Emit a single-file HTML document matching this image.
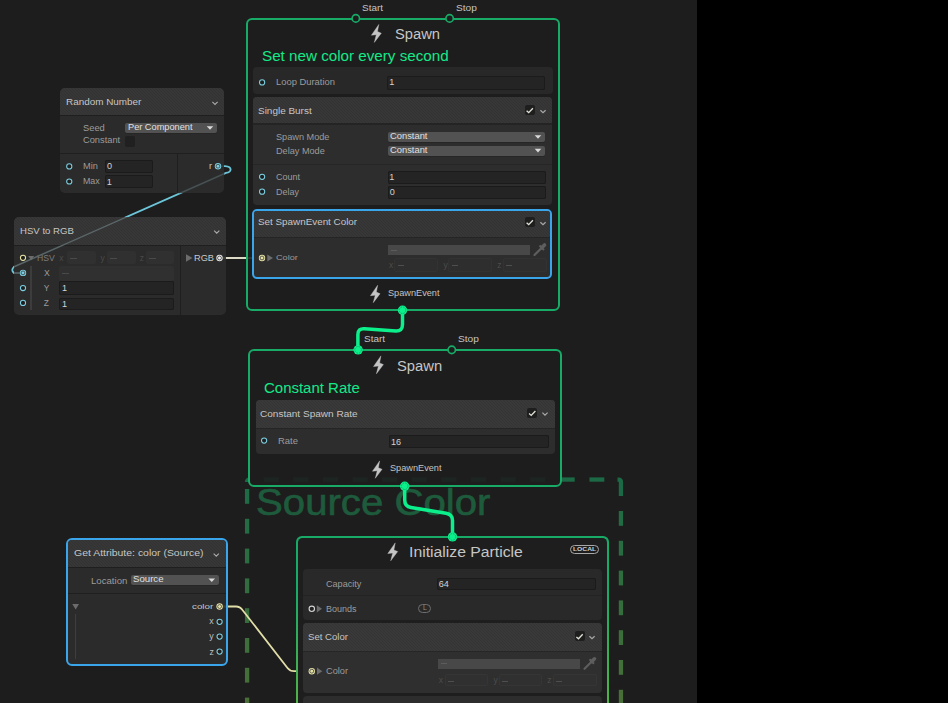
<!DOCTYPE html>
<html><head><meta charset="utf-8"><style>
html,body{margin:0;padding:0;}
body{width:948px;height:703px;overflow:hidden;background:#1d1d1d;position:relative;font-family:"Liberation Sans", sans-serif;}
.t{position:absolute;white-space:nowrap;line-height:1;font-family:"Liberation Sans", sans-serif;}
.r{position:absolute;box-sizing:content-box;}
svg{position:absolute;left:0;top:0;}
</style></head><body>
<svg width="948" height="703" style="z-index:0"><rect x="263.9" y="477.4" width="14.8" height="4.3" fill="#1c6a45"/><rect x="293.5" y="477.4" width="14.8" height="4.3" fill="#1c6a45"/><rect x="323.1" y="477.4" width="14.8" height="4.3" fill="#1c6a45"/><rect x="352.7" y="477.4" width="14.8" height="4.3" fill="#1c6a45"/><rect x="382.3" y="477.4" width="14.8" height="4.3" fill="#1c6a45"/><rect x="411.9" y="477.4" width="14.8" height="4.3" fill="#1c6a45"/><rect x="441.5" y="477.4" width="14.8" height="4.3" fill="#1c6a45"/><rect x="471.1" y="477.4" width="14.8" height="4.3" fill="#1c6a45"/><rect x="500.7" y="477.4" width="14.8" height="4.3" fill="#1c6a45"/><rect x="530.3" y="477.4" width="14.8" height="4.3" fill="#1c6a45"/><rect x="559.9" y="477.4" width="14.8" height="4.3" fill="#1c6a45"/><rect x="589.5" y="477.4" width="14.8" height="4.3" fill="#1c6a45"/><path d="M617.5,479.55 L618.5,479.55 Q620.95,479.55 620.95,482 L620.95,496" fill="none" stroke="#1c6a45" stroke-width="4.3"/><path d="M247.1,482 Q247.1,479.55 249.5,479.55" fill="none" stroke="#1c6a45" stroke-width="4.3"/><rect x="618.8" y="511.0" width="4.3" height="14.8" fill="#236b43"/><rect x="618.8" y="540.8" width="4.3" height="14.8" fill="#296c41"/><rect x="618.8" y="570.6" width="4.3" height="14.8" fill="#2f6d3f"/><rect x="618.8" y="600.4" width="4.3" height="14.8" fill="#366d3d"/><rect x="618.8" y="630.2" width="4.3" height="14.8" fill="#3c6e3b"/><rect x="618.8" y="660.0" width="4.3" height="14.8" fill="#426f3a"/><rect x="618.8" y="689.8" width="4.3" height="14.8" fill="#486f38"/><rect x="244.95" y="489.0" width="4.3" height="14.8" fill="#1e6b45"/><rect x="244.95" y="518.8" width="4.3" height="14.8" fill="#256b43"/><rect x="244.95" y="548.6" width="4.3" height="14.8" fill="#2b6c41"/><rect x="244.95" y="578.4" width="4.3" height="14.8" fill="#316d3f"/><rect x="244.95" y="608.2" width="4.3" height="14.8" fill="#376d3d"/><rect x="244.95" y="638.0" width="4.3" height="14.8" fill="#3e6e3b"/><rect x="244.95" y="667.8" width="4.3" height="14.8" fill="#446f39"/><rect x="244.95" y="697.6" width="4.3" height="14.8" fill="#4a6f37"/><path d="M218,166.2 L225,166.2 Q230.6,166.5 230.6,169.5 Q230.5,172.3 226,172.9 L14,266.8 Q10.5,270.2 14,273 L23,273" fill="none" stroke="#6cc6da" stroke-width="1.8"/><path d="M219,258 L262,258" fill="none" stroke="#dcdac4" stroke-width="2"/><path d="M219.6,606.5 L236,606.5 Q240,606.5 242.5,610 L287.5,668 Q290,671.2 294,671.2 L311.75,671.2" fill="none" stroke="#e2dea8" stroke-width="1.8"/></svg>
<div style="position:absolute;left:0;top:0;width:948px;height:703px;z-index:1">
<div class="r" style="left:697px;top:0;width:251px;height:703px;background:#000"></div>
<div class="t" style="left:255.59px;top:484.27px;font-size:36.99px;color:#1e5b3c;transform:scaleX(1.0860);transform-origin:0 0;-webkit-text-stroke:0.6px #1e5b3c;">Source Color</div>
<div class="r" style="left:246px;top:17.6px;width:310px;height:289.4px;border:2px solid #18ab68;border-radius:6px;background:rgba(30,30,30,0.9);"></div>
<div class="t" style="left:361.95px;top:4.84px;font-size:8.21px;color:#c4c4c4;transform:scaleX(1.2118);transform-origin:0 0;">Start</div>
<div class="t" style="left:455.54px;top:4.84px;font-size:8.21px;color:#c4c4c4;transform:scaleX(1.2371);transform-origin:0 0;">Stop</div>
<div class="t" style="left:394.94px;top:26.97px;font-size:14.32px;color:#c6c6c6;transform:scaleX(1.0293);transform-origin:0 0;">Spawn</div>
<div class="t" style="left:261.82px;top:48.63px;font-size:14.61px;color:#14e98a;transform:scaleX(1.0402);transform-origin:0 0;">Set new color every second</div>
<div class="r" style="left:253px;top:66.8px;width:299.50px;height:27.20px;background:#282828;border-radius:4px"></div>
<div class="t" style="left:275.65px;top:77.70px;font-size:8.50px;color:#9c9c9c;transform:scaleX(1.1042);transform-origin:0 0;">Loop Duration</div>
<div class="r" style="left:387.4px;top:76.4px;width:158.10px;height:13.20px;background:#242424;border-radius:2px;box-shadow:inset 0 0 0 1px #1b1b1b"></div>
<div class="t" style="left:389.32px;top:78.31px;font-size:9.08px;color:#d4d4d4;">1</div>
<div class="r" style="left:252.8px;top:97px;width:299.70px;height:108.00px;background:#2d2d2d;border-radius:4px"></div>
<div class="r" style="left:252.8px;top:97px;width:299.70px;height:26.30px;background:#333333;border-radius:4px 4px 0 0;background-image:repeating-linear-gradient(45deg,rgba(255,255,255,0.02) 0 1.06px,rgba(0,0,0,0.02) 1.06px 2.12px);"></div>
<div class="r" style="left:252.8px;top:123.3px;width:299.70px;height:1.30px;background:#242424;"></div>
<div class="r" style="left:252.8px;top:163.5px;width:299.70px;height:1.30px;background:#262626;"></div>
<div class="t" style="left:257.80px;top:105.71px;font-size:9.67px;color:#c6c6c6;transform:scaleX(1.0307);transform-origin:0 0;">Single Burst</div>
<div class="r" style="left:524.8px;top:105.2px;width:10px;height:10px;background:#1e1e1e;border-radius:2px"></div>
<div class="t" style="left:275.89px;top:132.65px;font-size:8.79px;color:#9c9c9c;transform:scaleX(1.0432);transform-origin:0 0;">Spawn Mode</div>
<div class="r" style="left:388px;top:131.8px;width:157.00px;height:10.20px;background:#525252;border-radius:2px;box-shadow:0 1px 0 #262626"></div>
<div class="t" style="left:389.73px;top:131.77px;font-size:8.65px;color:#e0e0e0;transform:scaleX(1.0845);transform-origin:0 0;">Constant</div>
<div class="t" style="left:275.57px;top:146.55px;font-size:8.79px;color:#9c9c9c;transform:scaleX(1.0412);transform-origin:0 0;">Delay Mode</div>
<div class="r" style="left:388px;top:145.5px;width:157.00px;height:10.00px;background:#525252;border-radius:2px;box-shadow:0 1px 0 #262626"></div>
<div class="t" style="left:389.73px;top:145.67px;font-size:8.65px;color:#e0e0e0;transform:scaleX(1.0845);transform-origin:0 0;">Constant</div>
<div class="t" style="left:275.85px;top:172.95px;font-size:8.79px;color:#9c9c9c;transform:scaleX(1.0239);transform-origin:0 0;">Count</div>
<div class="r" style="left:387.5px;top:170.5px;width:158.00px;height:13.25px;background:#242424;border-radius:2px;box-shadow:inset 0 0 0 1px #1b1b1b"></div>
<div class="t" style="left:389.32px;top:172.91px;font-size:9.08px;color:#d4d4d4;">1</div>
<div class="t" style="left:275.58px;top:187.55px;font-size:8.79px;color:#9c9c9c;transform:scaleX(1.0175);transform-origin:0 0;">Delay</div>
<div class="r" style="left:387.5px;top:185.75px;width:158.00px;height:13.25px;background:#242424;border-radius:2px;box-shadow:inset 0 0 0 1px #1b1b1b"></div>
<div class="t" style="left:389.64px;top:188.11px;font-size:9.08px;color:#d4d4d4;">0</div>
<div class="r" style="left:252.3px;top:209.3px;width:296.2px;height:65.7px;border:2px solid #3aa5ea;border-radius:5px;background:#2d2d2d"></div>
<div class="r" style="left:254.3px;top:211.3px;width:296.20px;height:25.70px;background:#333333;border-radius:3px 3px 0 0;background-image:repeating-linear-gradient(45deg,rgba(255,255,255,0.02) 0 1.06px,rgba(0,0,0,0.02) 1.06px 2.12px);"></div>
<div class="r" style="left:254.3px;top:237px;width:296.20px;height:1.30px;background:#252525;"></div>
<div class="t" style="left:257.86px;top:218.31px;font-size:9.08px;color:#c6c6c6;transform:scaleX(1.0854);transform-origin:0 0;">Set SpawnEvent Color</div>
<div class="r" style="left:524.8px;top:217.2px;width:10px;height:10px;background:#1e1e1e;border-radius:2px"></div>
<div class="t" style="left:275.74px;top:254.37px;font-size:8.07px;color:#9c9c9c;transform:scaleX(1.1328);transform-origin:0 0;">Color</div>
<div class="r" style="left:388px;top:245px;width:142.00px;height:10.10px;background:#484848;"></div>
<div class="r" style="left:391px;top:249.6px;width:6.00px;height:0.80px;background:#5c5c5c;"></div>
<div class="r" style="left:394.2px;top:258px;width:43.70px;height:14.20px;background:#2e2e2e;border-radius:2px;box-shadow:inset 0 0 0 1px #323232"></div>
<div class="t" style="left:388.97px;top:261.10px;font-size:8.50px;color:#4c4c4c;">x</div>
<div class="r" style="left:397.7px;top:265px;width:6.00px;height:0.80px;background:#4e4e4e;"></div>
<div class="r" style="left:448.4px;top:258px;width:43.60px;height:14.20px;background:#2e2e2e;border-radius:2px;box-shadow:inset 0 0 0 1px #323232"></div>
<div class="t" style="left:443.56px;top:261.10px;font-size:8.50px;color:#4c4c4c;">y</div>
<div class="r" style="left:451.9px;top:265px;width:6.00px;height:0.80px;background:#4e4e4e;"></div>
<div class="r" style="left:502.5px;top:258px;width:44.60px;height:14.20px;background:#2e2e2e;border-radius:2px;box-shadow:inset 0 0 0 1px #323232"></div>
<div class="t" style="left:497.36px;top:261.10px;font-size:8.50px;color:#4c4c4c;">z</div>
<div class="r" style="left:506.0px;top:265px;width:6.00px;height:0.80px;background:#4e4e4e;"></div>
<div class="t" style="left:387.59px;top:287.81px;font-size:9.67px;color:#c4c4c4;transform:scaleX(0.9490);transform-origin:0 0;">SpawnEvent</div>
<div class="r" style="left:248px;top:348.8px;width:310px;height:134.2px;border:2px solid #18ab68;border-radius:6px;background:rgba(30,30,30,0.9);"></div>
<div class="t" style="left:363.85px;top:336.04px;font-size:8.21px;color:#c4c4c4;transform:scaleX(1.2118);transform-origin:0 0;">Start</div>
<div class="t" style="left:457.54px;top:336.04px;font-size:8.21px;color:#c4c4c4;transform:scaleX(1.2362);transform-origin:0 0;">Stop</div>
<div class="t" style="left:396.94px;top:358.87px;font-size:14.32px;color:#c6c6c6;transform:scaleX(1.0317);transform-origin:0 0;">Spawn</div>
<div class="t" style="left:263.85px;top:380.50px;font-size:14.75px;color:#14e98a;transform:scaleX(1.0154);transform-origin:0 0;">Constant Rate</div>
<div class="r" style="left:255.5px;top:400px;width:299.00px;height:53.80px;background:#2d2d2d;border-radius:4px"></div>
<div class="r" style="left:255.5px;top:400px;width:299.00px;height:27.60px;background:#353535;border-radius:4px 4px 0 0;background-image:repeating-linear-gradient(45deg,rgba(255,255,255,0.02) 0 1.06px,rgba(0,0,0,0.02) 1.06px 2.12px);"></div>
<div class="r" style="left:255.5px;top:427.6px;width:299.00px;height:1.30px;background:#252525;"></div>
<div class="t" style="left:259.80px;top:408.91px;font-size:9.67px;color:#c6c6c6;transform:scaleX(1.0389);transform-origin:0 0;">Constant Spawn Rate</div>
<div class="r" style="left:527.3px;top:408px;width:10px;height:10px;background:#1e1e1e;border-radius:2px"></div>
<div class="t" style="left:277.74px;top:436.75px;font-size:8.79px;color:#9c9c9c;transform:scaleX(1.0770);transform-origin:0 0;">Rate</div>
<div class="r" style="left:389px;top:434.6px;width:159.75px;height:13.20px;background:#242424;border-radius:2px;box-shadow:inset 0 0 0 1px #1b1b1b"></div>
<div class="t" style="left:390.92px;top:437.61px;font-size:9.08px;color:#d4d4d4;">16</div>
<div class="t" style="left:389.69px;top:463.11px;font-size:9.67px;color:#c4c4c4;transform:scaleX(0.9490);transform-origin:0 0;">SpawnEvent</div>
<div class="r" style="left:295.8px;top:536.2px;width:313px;height:180px;border-radius:6px;background:linear-gradient(#18ab68,#18ab68 30%,#52b246 93%);"></div>
<div class="r" style="left:297.5px;top:537.9px;width:309.6px;height:180px;border-radius:4.5px;background:#1e1e1e"></div>
<div class="t" style="left:409.28px;top:544.75px;font-size:14.46px;color:#c6c6c6;transform:scaleX(1.0903);transform-origin:0 0;">Initialize Particle</div>
<div class="r" style="left:570.3px;top:544.9px;width:26.6px;height:6.5px;border:1.2px solid #a8a8a8;border-radius:5px;height:7.2px"></div>
<div class="t" style="left:573.16px;top:546.32px;font-size:6.00px;color:#d0d0d0;transform:scaleX(1.1194);transform-origin:0 0;font-weight:bold;">LOCAL</div>
<div class="r" style="left:303.2px;top:568.8px;width:298.60px;height:51.20px;background:#292929;border-radius:4px"></div>
<div class="r" style="left:303.2px;top:595.2px;width:298.60px;height:1.30px;background:#232323;"></div>
<div class="t" style="left:326.04px;top:579.95px;font-size:8.79px;color:#9c9c9c;transform:scaleX(1.0349);transform-origin:0 0;">Capacity</div>
<div class="r" style="left:436.8px;top:578px;width:159.00px;height:11.50px;background:#242424;border-radius:2px;box-shadow:inset 0 0 0 1px #1b1b1b"></div>
<div class="t" style="left:438.65px;top:579.71px;font-size:9.08px;color:#d4d4d4;">64</div>
<div class="t" style="left:325.78px;top:604.75px;font-size:8.79px;color:#9c9c9c;transform:scaleX(1.0243);transform-origin:0 0;">Bounds</div>
<div class="r" style="left:418.2px;top:604px;width:10.6px;height:7px;border:1px solid #6e6e6e;border-radius:5px"></div>
<div class="t" style="left:422.64px;top:605.48px;font-size:6.76px;color:#8c8c8c;transform:scaleX(1.0307);transform-origin:0 0;">L</div>
<div class="r" style="left:303px;top:623px;width:298.80px;height:69.50px;background:#2f2f2f;border-radius:4px"></div>
<div class="r" style="left:303px;top:623px;width:298.80px;height:27.60px;background:#353535;border-radius:4px 4px 0 0;background-image:repeating-linear-gradient(45deg,rgba(255,255,255,0.02) 0 1.06px,rgba(0,0,0,0.02) 1.06px 2.12px);"></div>
<div class="r" style="left:303px;top:650.6px;width:298.80px;height:1.30px;background:#262626;"></div>
<div class="t" style="left:307.87px;top:632.31px;font-size:9.67px;color:#c6c6c6;transform:scaleX(0.9930);transform-origin:0 0;">Set Color</div>
<div class="r" style="left:574.6px;top:631.3px;width:10px;height:10px;background:#1e1e1e;border-radius:2px"></div>
<div class="t" style="left:325.84px;top:666.90px;font-size:8.50px;color:#9c9c9c;transform:scaleX(1.0848);transform-origin:0 0;">Color</div>
<div class="r" style="left:437.5px;top:658.8px;width:142.50px;height:10.00px;background:#484848;"></div>
<div class="r" style="left:441px;top:663.4px;width:6.00px;height:0.80px;background:#5c5c5c;"></div>
<div class="r" style="left:444.5px;top:673.8px;width:43.50px;height:12.50px;background:#303030;border-radius:2px;box-shadow:inset 0 0 0 1px #353535"></div>
<div class="t" style="left:438.87px;top:676.30px;font-size:8.50px;color:#4c4c4c;">x</div>
<div class="r" style="left:448.0px;top:680.5px;width:6.00px;height:0.80px;background:#4e4e4e;"></div>
<div class="r" style="left:498.5px;top:673.8px;width:43.50px;height:12.50px;background:#303030;border-radius:2px;box-shadow:inset 0 0 0 1px #353535"></div>
<div class="t" style="left:493.46px;top:676.30px;font-size:8.50px;color:#4c4c4c;">y</div>
<div class="r" style="left:502.0px;top:680.5px;width:6.00px;height:0.80px;background:#4e4e4e;"></div>
<div class="r" style="left:552.5px;top:673.8px;width:44.50px;height:12.50px;background:#303030;border-radius:2px;box-shadow:inset 0 0 0 1px #353535"></div>
<div class="t" style="left:547.16px;top:676.30px;font-size:8.50px;color:#4c4c4c;">z</div>
<div class="r" style="left:556.0px;top:680.5px;width:6.00px;height:0.80px;background:#4e4e4e;"></div>
<div class="r" style="left:303px;top:696.3px;width:298.80px;height:6.70px;background:#2d2d2d;border-radius:4px 4px 0 0"></div>
<div class="r" style="left:60px;top:88px;width:164.30px;height:105.30px;background:rgba(46,46,46,0.9);border-radius:5px;"></div>
<div class="r" style="left:60px;top:88px;width:164.30px;height:27.00px;background:rgba(52,52,52,0.9);border-radius:5px 5px 0 0;background-image:repeating-linear-gradient(45deg,rgba(255,255,255,0.02) 0 1.06px,rgba(0,0,0,0.02) 1.06px 2.12px);"></div>
<div class="r" style="left:60px;top:115px;width:164.30px;height:1.30px;background:rgba(28,28,28,0.75);"></div>
<div class="r" style="left:60px;top:116.3px;width:164.30px;height:36.70px;background:rgba(44,44,44,0.5);"></div>
<div class="r" style="left:60px;top:153px;width:164.30px;height:1.30px;background:rgba(28,28,28,0.75);"></div>
<div class="r" style="left:177px;top:154.3px;width:1.20px;height:39.00px;background:rgba(28,28,28,0.75);"></div>
<div class="t" style="left:65.61px;top:96.84px;font-size:9.52px;color:#c6c6c6;transform:scaleX(1.0399);transform-origin:0 0;">Random Number</div>
<div class="t" style="left:82.58px;top:123.68px;font-size:8.94px;color:#9c9c9c;transform:scaleX(1.0458);transform-origin:0 0;">Seed</div>
<div class="r" style="left:125.4px;top:123px;width:91.60px;height:9.70px;background:#525252;border-radius:2px;box-shadow:0 1px 0 #262626"></div>
<div class="t" style="left:127.96px;top:122.97px;font-size:8.65px;color:#e0e0e0;transform:scaleX(1.0668);transform-origin:0 0;">Per Component</div>
<div class="t" style="left:82.53px;top:136.48px;font-size:8.94px;color:#9c9c9c;transform:scaleX(1.0407);transform-origin:0 0;">Constant</div>
<div class="r" style="left:124.7px;top:136.2px;width:10.00px;height:10.40px;background:#202020;border-radius:2px"></div>
<div class="t" style="left:82.76px;top:161.82px;font-size:8.36px;color:#9c9c9c;transform:scaleX(1.1026);transform-origin:0 0;">Min</div>
<div class="t" style="left:82.79px;top:177.00px;font-size:8.50px;color:#9c9c9c;transform:scaleX(1.0389);transform-origin:0 0;">Max</div>
<div class="r" style="left:105.2px;top:160.4px;width:48.30px;height:12.80px;background:#242424;border-radius:2px;box-shadow:inset 0 0 0 1px #1b1b1b"></div>
<div class="t" style="left:107.04px;top:162.31px;font-size:9.08px;color:#d4d4d4;">0</div>
<div class="r" style="left:105.2px;top:175.3px;width:48.30px;height:12.85px;background:#242424;border-radius:2px;box-shadow:inset 0 0 0 1px #1b1b1b"></div>
<div class="t" style="left:106.72px;top:177.91px;font-size:9.08px;color:#d4d4d4;">1</div>
<div class="t" style="left:208.97px;top:161.98px;font-size:9.00px;color:#c8c8c8;">r</div>
<div class="r" style="left:14px;top:217px;width:211.80px;height:98.00px;background:rgba(46,46,46,0.9);border-radius:5px;"></div>
<div class="r" style="left:14px;top:217px;width:211.80px;height:28.00px;background:rgba(52,52,52,0.9);border-radius:5px 5px 0 0;background-image:repeating-linear-gradient(45deg,rgba(255,255,255,0.02) 0 1.06px,rgba(0,0,0,0.02) 1.06px 2.12px);"></div>
<div class="r" style="left:14px;top:245px;width:211.80px;height:1.30px;background:rgba(28,28,28,0.75);"></div>
<div class="r" style="left:179.5px;top:246.3px;width:1.20px;height:68.70px;background:rgba(28,28,28,0.75);"></div>
<div class="t" style="left:19.63px;top:226.51px;font-size:9.08px;color:#c6c6c6;transform:scaleX(1.0566);transform-origin:0 0;">HSV to RGB</div>
<div class="t" style="left:36.81px;top:253.56px;font-size:9.08px;color:#7c7c7c;transform:scaleX(0.9499);transform-origin:0 0;">HSV</div>
<div class="r" style="left:66.6px;top:250.6px;width:29.20px;height:13.50px;background:#303030;border-radius:2px"></div>
<div class="t" style="left:59.37px;top:253.80px;font-size:8.50px;color:#4a4a4a;">x</div>
<div class="r" style="left:70.1px;top:257.6px;width:6.50px;height:0.80px;background:#4a4a4a;"></div>
<div class="r" style="left:106.5px;top:250.6px;width:29.00px;height:13.50px;background:#303030;border-radius:2px"></div>
<div class="t" style="left:100.46px;top:253.80px;font-size:8.50px;color:#4a4a4a;">y</div>
<div class="r" style="left:110.0px;top:257.6px;width:6.50px;height:0.80px;background:#4a4a4a;"></div>
<div class="r" style="left:145.5px;top:250.6px;width:28.50px;height:13.50px;background:#303030;border-radius:2px"></div>
<div class="t" style="left:139.66px;top:253.80px;font-size:8.50px;color:#4a4a4a;">z</div>
<div class="r" style="left:149.0px;top:257.6px;width:6.50px;height:0.80px;background:#4a4a4a;"></div>
<div class="r" style="left:29.7px;top:265.5px;width:2.00px;height:44.80px;background:#3c3c3c;"></div>
<div class="t" style="left:43.68px;top:269.12px;font-size:8.36px;color:#9c9c9c;transform:scaleX(1.0421);transform-origin:0 0;">X</div>
<div class="r" style="left:59.2px;top:265.5px;width:114.80px;height:15.00px;background:#303030;border-radius:2px"></div>
<div class="r" style="left:62.4px;top:272.9px;width:7.10px;height:0.80px;background:#4a4a4a;"></div>
<div class="t" style="left:43.79px;top:284.02px;font-size:8.36px;color:#9c9c9c;">Y</div>
<div class="t" style="left:43.75px;top:299.12px;font-size:8.36px;color:#9c9c9c;">Z</div>
<div class="r" style="left:59.2px;top:281.2px;width:114.80px;height:13.50px;background:#242424;border-radius:2px;box-shadow:inset 0 0 0 1px #1b1b1b"></div>
<div class="t" style="left:61.92px;top:284.11px;font-size:9.08px;color:#d4d4d4;">1</div>
<div class="r" style="left:59.2px;top:297.5px;width:114.80px;height:12.80px;background:#242424;border-radius:2px;box-shadow:inset 0 0 0 1px #1b1b1b"></div>
<div class="t" style="left:61.92px;top:299.51px;font-size:9.08px;color:#d4d4d4;">1</div>
<div class="t" style="left:194.26px;top:253.81px;font-size:9.08px;color:#c8c8c8;transform:scaleX(1.0143);transform-origin:0 0;">RGB</div>
<div class="r" style="left:66px;top:538.2px;width:157.6px;height:123.6px;border:2px solid #3aa5ea;border-radius:6px;background:rgba(46,46,46,0.9)"></div>
<div class="r" style="left:68px;top:540.2px;width:157.60px;height:26.80px;background:rgba(52,52,52,0.9);border-radius:4px 4px 0 0;background-image:repeating-linear-gradient(45deg,rgba(255,255,255,0.02) 0 1.06px,rgba(0,0,0,0.02) 1.06px 2.12px);"></div>
<div class="r" style="left:68px;top:567px;width:157.60px;height:1.30px;background:rgba(28,28,28,0.75);"></div>
<div class="r" style="left:68px;top:568.3px;width:157.60px;height:24.20px;background:rgba(44,44,44,0.5);"></div>
<div class="r" style="left:68px;top:592.5px;width:157.60px;height:1.30px;background:rgba(28,28,28,0.75);"></div>
<div class="t" style="left:73.68px;top:549.16px;font-size:9.38px;color:#c6c6c6;transform:scaleX(1.1144);transform-origin:0 0;">Get Attribute: color (Source)</div>
<div class="t" style="left:90.53px;top:576.80px;font-size:8.50px;color:#9c9c9c;transform:scaleX(1.1324);transform-origin:0 0;">Location</div>
<div class="r" style="left:130.8px;top:575.4px;width:87.95px;height:9.60px;background:#525252;border-radius:2px;box-shadow:0 1px 0 #262626"></div>
<div class="t" style="left:132.67px;top:574.87px;font-size:8.65px;color:#e0e0e0;transform:scaleX(1.1168);transform-origin:0 0;">Source</div>
<div class="r" style="left:75px;top:613.7px;width:1.20px;height:45.10px;background:#3e3e3e;"></div>
<div class="t" style="left:191.76px;top:603.09px;font-size:7.92px;color:#c4c4c4;transform:scaleX(1.2354);transform-origin:0 0;">color</div>
<div class="t" style="left:209.19px;top:617.05px;font-size:8.80px;color:#c0c0c0;">x</div>
<div class="t" style="left:209.14px;top:631.75px;font-size:8.80px;color:#c0c0c0;">y</div>
<div class="t" style="left:209.54px;top:647.75px;font-size:8.80px;color:#c0c0c0;">z</div>
</div>
<svg width="948" height="703" style="z-index:2"><clipPath id="clipA"><rect x="60" y="88" width="164.3" height="105.3"/></clipPath><clipPath id="clipB"><rect x="14" y="217" width="211.8" height="98"/></clipPath><path clip-path="url(#clipA)" d="M226,172.9 L14,266.8" fill="none" stroke="#4a5355" stroke-width="1.2"/><path clip-path="url(#clipB)" d="M226,172.9 L14,266.8 Q10.5,270.2 14,273 L23,273" fill="none" stroke="#5b6668" stroke-width="1.3"/><path d="M402.5,310 L402.5,324.5 Q402.5,331.2 396,331.1 L364.5,328.7 Q357.9,328.2 357.9,334.5 L357.9,349.8" fill="none" stroke="#0cf08c" stroke-width="3.5"/><path d="M404.7,486 L404.7,500 Q404.7,506.5 411,507.5 L446,513.2 Q452.5,514.3 452.5,520.5 L452.5,536.8" fill="none" stroke="#0cf08c" stroke-width="3.5"/><circle cx="355.8" cy="18.4" r="3.7" fill="#1d1d1d" stroke="#18ab68" stroke-width="1.7"/><circle cx="449.6" cy="18.4" r="3.7" fill="#1d1d1d" stroke="#18ab68" stroke-width="1.7"/><polygon points="378.80,24.50 371.40,35.20 376.30,34.70 374.30,42.40 381.30,33.20 377.50,31.50" fill="#c4c4c4" stroke="#c4c4c4" stroke-width="0.4" stroke-linejoin="round"/><circle cx="262.1" cy="82.4" r="2.6" fill="#1e1e1e" stroke="#7ccfe0" stroke-width="1.05"/><polyline points="526.5999999999999,110.8 528.6999999999999,112.60000000000001 532.9,108.2" fill="none" stroke="#e0e0d6" stroke-width="1.35"/><polyline points="540.4,110.2 543,112.7 545.6,110.2" fill="none" stroke="#a8a8a8" stroke-width="1.2"/><polygon points="534.7,135.20000000000002 541.3,135.20000000000002 538,138.8" fill="#dadada"/><polygon points="534.7,148.8 541.3,148.8 538,152.4" fill="#dadada"/><circle cx="262.1" cy="176.8" r="2.6" fill="#1e1e1e" stroke="#7ccfe0" stroke-width="1.05"/><circle cx="262.1" cy="191.7" r="2.6" fill="#1e1e1e" stroke="#7ccfe0" stroke-width="1.05"/><polyline points="526.5999999999999,222.79999999999998 528.6999999999999,224.6 532.9,220.2" fill="none" stroke="#e0e0d6" stroke-width="1.35"/><polyline points="540.4,222.20000000000002 543,224.70000000000002 545.6,222.20000000000002" fill="none" stroke="#a8a8a8" stroke-width="1.2"/><circle cx="262" cy="258" r="3.2" fill="#e6e2a6"/><circle cx="262" cy="258" r="1.9000000000000001" fill="none" stroke="#3a3a3a" stroke-width="0.8"/><circle cx="262" cy="258" r="1.1" fill="#e6e2a6"/><polygon points="267.3,254.6 267.3,261.4 273,258" fill="#6c6c6c"/><path d="M534.5,255 L541.5,248" stroke="#5e5e5e" stroke-width="2.2" stroke-linecap="round"/><path d="M539.5,245.5 L544.0,250" stroke="#5e5e5e" stroke-width="2"/><path d="M541.7,247.8 L544.5,245" stroke="#5e5e5e" stroke-width="3.6" stroke-linecap="round"/><polygon points="377.64,285.29 370.46,295.67 375.22,295.19 373.28,302.65 380.07,293.73 376.38,292.08" fill="#c4c4c4" stroke="#c4c4c4" stroke-width="0.4" stroke-linejoin="round"/><circle cx="402.5" cy="310.2" r="4.7" fill="#0cf08c"/><circle cx="402.5" cy="310.2" r="3.3" fill="none" stroke="#0e9e5c" stroke-width="0.8" stroke-dasharray="1.6 1"/><circle cx="358.1" cy="349.85" r="4.7" fill="#0cf08c"/><circle cx="358.1" cy="349.85" r="3.3" fill="none" stroke="#0e9e5c" stroke-width="0.8" stroke-dasharray="1.6 1"/><circle cx="451.75" cy="349.85" r="3.7" fill="#1d1d1d" stroke="#18ab68" stroke-width="1.7"/><polygon points="380.90,355.90 373.50,366.60 378.40,366.10 376.40,373.80 383.40,364.60 379.60,362.90" fill="#c4c4c4" stroke="#c4c4c4" stroke-width="0.4" stroke-linejoin="round"/><polyline points="529.0999999999999,413.6 531.1999999999999,415.4 535.4,411.0" fill="none" stroke="#e0e0d6" stroke-width="1.35"/><polyline points="542.4,412.59999999999997 545,415.09999999999997 547.6,412.59999999999997" fill="none" stroke="#a8a8a8" stroke-width="1.2"/><circle cx="264.1" cy="440.6" r="2.6" fill="#1e1e1e" stroke="#7ccfe0" stroke-width="1.05"/><polygon points="379.64,460.89 372.46,471.27 377.22,470.79 375.28,478.25 382.07,469.33 378.38,467.68" fill="#c4c4c4" stroke="#c4c4c4" stroke-width="0.4" stroke-linejoin="round"/><circle cx="404.7" cy="486.2" r="4.7" fill="#0cf08c"/><circle cx="404.7" cy="486.2" r="3.3" fill="none" stroke="#0e9e5c" stroke-width="0.8" stroke-dasharray="1.6 1"/><circle cx="452.5" cy="536.9" r="4.7" fill="#0cf08c"/><circle cx="452.5" cy="536.9" r="3.3" fill="none" stroke="#0e9e5c" stroke-width="0.8" stroke-dasharray="1.6 1"/><polygon points="395.20,542.90 387.80,553.60 392.70,553.10 390.70,560.80 397.70,551.60 393.90,549.90" fill="#c4c4c4" stroke="#c4c4c4" stroke-width="0.4" stroke-linejoin="round"/><circle cx="311.8" cy="608.8" r="2.7" fill="#222" stroke="#d4d4d4" stroke-width="1.1"/><polygon points="316.8,605.2 316.8,612.4 322,608.8" fill="#6c6c6c"/><polyline points="576.4,636.9 578.5,638.6999999999999 582.7,634.3" fill="none" stroke="#e0e0d6" stroke-width="1.35"/><polyline points="589.4,636.1999999999999 592,638.6999999999999 594.6,636.1999999999999" fill="none" stroke="#a8a8a8" stroke-width="1.2"/><circle cx="311.8" cy="671.2" r="3.2" fill="#e6e2a6"/><circle cx="311.8" cy="671.2" r="1.9000000000000001" fill="none" stroke="#3a3a3a" stroke-width="0.8"/><circle cx="311.8" cy="671.2" r="1.1" fill="#e6e2a6"/><polygon points="317,667.6 317,674.8 322.3,671.2" fill="#6c6c6c"/><path d="M584.5,668.8 L591.5,661.8" stroke="#5e5e5e" stroke-width="2.2" stroke-linecap="round"/><path d="M589.5,659.3 L594.0,663.8" stroke="#5e5e5e" stroke-width="2"/><path d="M591.7,661.5999999999999 L594.5,658.8" stroke="#5e5e5e" stroke-width="3.6" stroke-linecap="round"/><polyline points="212.4,101.9 215,104.4 217.6,101.9" fill="none" stroke="#a8a8a8" stroke-width="1.2"/><polygon points="206.7,126.14999999999999 213.3,126.14999999999999 210,129.75" fill="#dadada"/><circle cx="69.25" cy="166.4" r="2.6" fill="#1e1e1e" stroke="#7ccfe0" stroke-width="1.05"/><circle cx="69.25" cy="181.5" r="2.6" fill="#1e1e1e" stroke="#7ccfe0" stroke-width="1.05"/><circle cx="218" cy="166.2" r="3.2" fill="#7ccfe0"/><circle cx="218" cy="166.2" r="1.9000000000000001" fill="none" stroke="#3a3a3a" stroke-width="0.8"/><circle cx="218" cy="166.2" r="1.1" fill="#7ccfe0"/><polyline points="214.15,230.6 216.75,233.1 219.35,230.6" fill="none" stroke="#a8a8a8" stroke-width="1.2"/><circle cx="23" cy="257.8" r="2.6" fill="#1e1e1e" stroke="#e6e2a6" stroke-width="1.05"/><polygon points="28.2,256.1 34.1,256.1 31.15,260.3" fill="#6c6c6c"/><circle cx="23" cy="272.9" r="3.2" fill="#7ccfe0"/><circle cx="23" cy="272.9" r="1.9000000000000001" fill="none" stroke="#3a3a3a" stroke-width="0.8"/><circle cx="23" cy="272.9" r="1.1" fill="#7ccfe0"/><circle cx="23" cy="288" r="2.6" fill="#1e1e1e" stroke="#7ccfe0" stroke-width="1.05"/><circle cx="23" cy="302.9" r="2.6" fill="#1e1e1e" stroke="#7ccfe0" stroke-width="1.05"/><polygon points="186,254.2 186,261.8 192.5,258" fill="#6c6c6c"/><circle cx="219.5" cy="258" r="3.2" fill="#e8e8e8"/><circle cx="219.5" cy="258" r="1.9000000000000001" fill="none" stroke="#3a3a3a" stroke-width="0.8"/><circle cx="219.5" cy="258" r="1.1" fill="#e8e8e8"/><polyline points="213.65,553.6 216.25,556.1 218.85,553.6" fill="none" stroke="#a8a8a8" stroke-width="1.2"/><polygon points="208.45,578.5 215.05,578.5 211.75,582.1" fill="#dadada"/><polygon points="72.3,604 79,604 75.65,609.6" fill="#6c6c6c"/><circle cx="219.6" cy="606.55" r="3.2" fill="#e6e2a6"/><circle cx="219.6" cy="606.55" r="1.9000000000000001" fill="none" stroke="#3a3a3a" stroke-width="0.8"/><circle cx="219.6" cy="606.55" r="1.1" fill="#e6e2a6"/><circle cx="219.6" cy="621.8" r="2.6" fill="#1e1e1e" stroke="#7ccfe0" stroke-width="1.05"/><circle cx="219.6" cy="636.6" r="2.6" fill="#1e1e1e" stroke="#7ccfe0" stroke-width="1.05"/><circle cx="219.6" cy="651.6" r="2.6" fill="#1e1e1e" stroke="#7ccfe0" stroke-width="1.05"/></svg>
</body></html>
